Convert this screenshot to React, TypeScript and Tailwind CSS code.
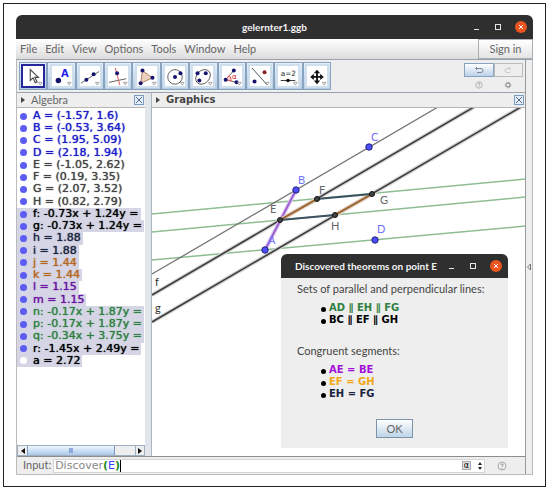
import React, { useState } from 'react';

const OBJECTS = [
    { text: "A = (-1.57, 1.6)", color: "text-[#1c1cc8]" },
    { text: "B = (-0.53, 3.64)", color: "text-[#1c1cc8]" },
    { text: "C = (1.95, 5.09)", color: "text-[#1c1cc8]" },
    { text: "D = (2.18, 1.94)", color: "text-[#1c1cc8]" },
    { text: "E = (-1.05, 2.62)", color: "text-[#444]" },
    { text: "F = (0.19, 3.35)", color: "text-[#444]" },
    { text: "G = (2.07, 3.52)", color: "text-[#444]" },
    { text: "H = (0.82, 2.79)", color: "text-[#444]" },
    { text: "f: -0.73x + 1.24y =", color: "text-black", selected: true },
    { text: "g: -0.73x + 1.24y =", color: "text-black", selected: true },
    { text: "h = 1.88", color: "text-[#1b2440]", selected: true },
    { text: "i = 1.88", color: "text-[#1b2440]", selected: true },
    { text: "j = 1.44", color: "text-[#b5651d]", selected: true },
    { text: "k = 1.44", color: "text-[#b5651d]", selected: true },
    { text: "l = 1.15", color: "text-[#6a10a0]", selected: true },
    { text: "m = 1.15", color: "text-[#6a10a0]", selected: true },
    { text: "n: -0.17x + 1.87y =", color: "text-[#2f8040]", selected: true },
    { text: "p: -0.17x + 1.87y =", color: "text-[#2f8040]", selected: true },
    { text: "q: -0.34x + 3.75y =", color: "text-[#2f8040]", selected: true },
    { text: "r: -1.45x + 2.49y =", color: "text-black", selected: true },
    { text: "a = 2.72", color: "text-black", selected: true, hidden: true },
];

const GREEN_LINES = [
    [152, 214, 526, 179],
    [152, 232, 526, 197],
    [152, 260, 526, 226],
];

const POINTS = [
    { name: "A", x: 265, y: 250, lx: 268, ly: 244, free: true },
    { name: "B", x: 296, y: 190, lx: 298, ly: 184, free: true },
    { name: "C", x: 369, y: 147, lx: 371, ly: 141, free: true },
    { name: "D", x: 375, y: 240, lx: 377, ly: 233, free: true },
    { name: "E", x: 280, y: 220, lx: 270, ly: 213 },
    { name: "F", x: 317, y: 199, lx: 319, ly: 194 },
    { name: "G", x: 372, y: 194, lx: 380, ly: 204 },
    { name: "H", x: 335, y: 215, lx: 331, ly: 230 },
];

const Dot = ({ x, y, fill = "#14146e" }: { x: number; y: number; fill?: string }) => (
    <circle cx={x} cy={y} r="2.2" fill={fill} />
);

const TOOLS = [
    {
        label: "Move",
        icon: <path d="M8 4v12l3-3 2.500 5.500 2-1-2.500-5h4z" fill="#fff" stroke="#444" strokeWidth="1.200" />,
    },
    {
        label: "Point",
        icon: (
            <>
                <circle cx="7" cy="16" r="3" fill="#14146e" />
                <text x="10" y="12" fontSize="11" fontWeight="bold" fill="#2222ee">A</text>
            </>
        ),
    },
    {
        label: "Line",
        icon: (
            <>
                <path d="M1 19 21 6" stroke="#555" />
                <Dot x={7} y={15} />
                <Dot x={15} y={9} />
            </>
        ),
    },
    {
        label: "Perpendicular line",
        icon: (
            <>
                <path d="M1 18 20 14" stroke="#555" />
                <path d="M8 2 13 21" stroke="#e66a6a" strokeWidth="1.200" />
                <Dot x={10} y={8} />
            </>
        ),
    },
    {
        label: "Polygon",
        icon: (
            <>
                <path d="M6 5 17 13 4 19z" fill="#ecd0be" stroke="#a8745c" />
                <Dot x={6} y={5} />
                <Dot x={17} y={13} />
                <Dot x={4} y={19} />
            </>
        ),
    },
    {
        label: "Circle with center",
        icon: (
            <>
                <circle cx="11" cy="12" r="8" fill="none" stroke="#555" />
                <Dot x={11} y={12} />
                <Dot x={17} y={8} />
            </>
        ),
    },
    {
        label: "Ellipse",
        icon: (
            <>
                <ellipse cx="11" cy="12" rx="9" ry="7" transform="rotate(-45 11 12)" fill="none" stroke="#555" />
                <Dot x={5} y={8} />
                <Dot x={14} y={8} />
                <Dot x={7} y={16} />
            </>
        ),
    },
    {
        label: "Angle",
        icon: (
            <>
                <path d="M4 15 13 5M4 15 16 18" stroke="#555" />
                <path d="M4 15 8 10.500A7 7 0 0 1 10 16.500z" fill="#ffd2d2" stroke="#e04848" />
                <text x="11" y="14" fontSize="8" fill="#e03030">α</text>
                <Dot x={4} y={15} />
                <Dot x={13} y={5} />
                <Dot x={16} y={18} />
            </>
        ),
    },
    {
        label: "Reflect about line",
        icon: (
            <>
                <path d="M2 2 19 21" stroke="#444" />
                <Dot x={5} y={17} />
                <Dot x={16} y={7} fill="#8c2020" />
            </>
        ),
    },
    {
        label: "Slider",
        icon: (
            <>
                <text x="3" y="11" fontSize="8" fill="#222">a=2</text>
                <path d="M3 16h16" stroke="#222" />
                <circle cx="11" cy="16" r="2" fill="#111" />
            </>
        ),
    },
    {
        label: "Move graphics view",
        icon: (
            <path
                d="M11 4 7.500 8H10v3H7.500V8.500L3.500 12l4 3.500V13H10v3H7.500L11 20l3.500-4H12v-3h2.500v2.500l4-3.500-4-3.500V11H12V8h2.500z"
                fill="#111"
            />
        ),
    },
];

const WindowButtons = () => (
    <div className="flex shrink-0 items-center gap-3">
        <button aria-label="Minimize" className="flex h-3 w-[10px] items-center justify-center">
            <span className="mt-1 h-px w-[5px] bg-gray-200" />
        </button>
        <button aria-label="Maximize" className="flex h-3 w-[10px] items-center justify-center">
            <span className="h-[6px] w-[6px] border border-gray-200" />
        </button>
        <button aria-label="Close" className="flex h-3 w-3 items-center justify-center rounded-full bg-[#e9541f]">
            <svg viewBox="0 0 8 8" className="h-2 w-2">
                <path d="M2 2 6 6M6 2 2 6" stroke="#fff" />
            </svg>
        </button>
    </div>
);

const PanelClose = ({ label }: { label: string }) => (
    <button aria-label={label} className="flex h-[10px] w-[10px] items-center justify-center border border-[#7a9cc0] bg-[#e4eefa]">
        <svg viewBox="0 0 8 8" className="h-2 w-2">
            <path d="M1 1 7 7M7 1 1 7" stroke="#556b85" />
        </svg>
    </button>
);

const HelpIcon = () => (
    <svg viewBox="0 0 10 10" className="h-full w-full">
        <circle cx="5" cy="5" r="4" fill="none" stroke="#aaa" />
        <path d="M3.800 4Q4 2.800 5 2.800 6.500 3 6 4.200L5 5.300V6M5 7v1" fill="none" stroke="#999" />
    </svg>
);

const Theorem = ({ color, children }: { color: string; children: React.ReactNode }) => (
    <li className="flex h-3 items-center gap-[3px]">
        <span className="mt-[2px] h-[5px] w-[5px] rounded-full bg-black" />
        <span className={`font-['DejaVu_Sans',sans-serif] text-[10px] leading-3 font-bold ${color}`}>{children}</span>
    </li>
);

const Dialog = () => (
    <div role="dialog" aria-label="Discovered theorems on point E" className="absolute right-[17px] bottom-2 w-[227px] rounded-t-md bg-[#eeeeee] text-[#444]">
        <div className="flex h-6 items-center justify-between rounded-t-md bg-[#302f2f] pr-[6px] pl-[14px]">
            <h2 className="text-[10px] font-bold whitespace-nowrap text-gray-100">Discovered theorems on point E</h2>
            <WindowButtons />
        </div>
        <div className="px-4 pt-[5px] pb-[10px] leading-3 whitespace-nowrap">
            <p>Sets of parallel and perpendicular lines:</p>
            <ul className="mt-[7px] pl-6">
                <Theorem color="text-[#2f8040]">AD ∥ EH ∥ FG</Theorem>
                <Theorem color="text-black">BC ∥ EF ∥ GH</Theorem>
            </ul>
            <p className="mt-[19px]">Congruent segments:</p>
            <ul className="mt-[7px] pl-6">
                <Theorem color="text-[#a010d8]">AE = BE</Theorem>
                <Theorem color="text-[#f0a818]">EF = GH</Theorem>
                <Theorem color="text-[#1b2440]">EH = FG</Theorem>
            </ul>
            <div className="mt-[19px] flex justify-center">
                <button className="h-[19px] w-[37px] border border-[#7f93a8] bg-linear-to-b from-white to-[#bed4e8] text-[#666]">OK</button>
            </div>
        </div>
    </div>
);

const Construction = () => (
    <svg viewBox="152 108 374 348" preserveAspectRatio="xMinYMin slice" className="absolute inset-0 h-full w-full" fontFamily="Lato, sans-serif">
        {GREEN_LINES.map(([x1, y1, x2, y2]) => (
            <line key={y1} x1={x1} y1={y1} x2={x2} y2={y2} stroke="#8fbd93" strokeWidth="1.500" />
        ))}
        <path d="M152 274 438 107" stroke="#777" strokeWidth="1.300" />
        <path d="M152 295 474 107M152 322 521 107" stroke="#d4d4d4" strokeWidth="4" />
        <path d="M152 295 474 107M152 322 521 107" stroke="#3c3c3c" strokeWidth="1.600" />
        <path d="M265 250 296 190" stroke="#dcc4ee" strokeWidth="4" />
        <path d="M265 250 296 190" stroke="#9b5fd0" strokeWidth="1.800" />
        <path d="M280 220 317 199M335 215 372 194" stroke="#e0cbb8" strokeWidth="4" />
        <path d="M280 220 317 199M335 215 372 194" stroke="#96602e" strokeWidth="2" />
        <path d="M280 220 335 215M317 199 372 194" stroke="#3c5260" strokeWidth="2" />
        {POINTS.map((p) => (
            <g key={p.name}>
                <circle cx={p.x} cy={p.y} r={p.free ? 3.2 : 2.5} fill={p.free ? "#4d4dff" : "#444"} stroke={p.free ? "#20207a" : "#111"} />
                <text x={p.lx} y={p.ly} fontSize="11" fill={p.free ? "#7070ff" : "#666"}>{p.name}</text>
            </g>
        ))}
        <text x="155" y="286" fontSize="11" fill="#333">f</text>
        <text x="155" y="312" fontSize="11" fill="#333">g</text>
    </svg>
);

const App: React.FC = () => {
    const [activeTool, setActiveTool] = useState("Move");

    return (
        <div className="flex min-h-screen flex-col bg-white pt-[3px] pr-1 pb-[5px] pl-[3px] font-[Lato,'DejaVu_Sans',sans-serif] text-[11px] text-[#666]">
            <div className="flex flex-1 flex-col border border-[#222] px-3 pt-[11px] pb-[11px]">
                {/* Title bar */}
                <header className="flex h-6 shrink-0 items-center rounded-t-md bg-[#302f2f] pr-[6px] pl-[62px]">
                    <h1 className="flex-1 text-center text-[10px] font-bold text-gray-100">gelernter1.ggb</h1>
                    <WindowButtons />
                </header>

                {/* Menu */}
                <nav className="flex h-[21px] shrink-0 items-center justify-between border-b border-[#9aa3ad] bg-linear-to-b from-white to-[#dcdcdc] pl-1">
                    <div className="flex items-center gap-2">
                        {["File", "Edit", "View", "Options", "Tools", "Window", "Help"].map((item) => (
                            <button key={item}>{item}</button>
                        ))}
                    </div>
                    <button className="h-5 w-[55px] border border-[#a8aeb6] bg-linear-to-b from-white to-[#e4e4e4]">Sign in</button>
                </nav>

                <div className="flex flex-1 border-x border-b border-[#bbb] bg-[#eeeeee]">
                    <div className="flex min-w-0 flex-1 flex-col">
                        {/* Toolbar */}
                        <div className="flex h-8 shrink-0 items-center justify-between pr-[2px] pl-[2px]">
                            <div className="grid h-7 w-[312px] grid-cols-11">
                                {TOOLS.map((tool) => (
                                    <button
                                        key={tool.label}
                                        aria-label={tool.label}
                                        onClick={() => setActiveTool(tool.label)}
                                        className="flex items-center justify-center border border-[#88a3c0] bg-linear-to-b from-[#e6f0fa] to-[#b6cce2]"
                                    >
                                        <span className={`flex h-6 w-6 border-2 bg-white ${activeTool === tool.label ? "border-[#26269a]" : "border-[#cfdfee]"}`}>
                                            <svg viewBox="0 0 22 22" className="h-full w-full" fill="none" fontFamily="DejaVu Sans, sans-serif">
                                                {tool.icon}
                                                <path d="M17 18h4l-2 3z" fill="#fff" stroke="#888" strokeWidth="0.800" />
                                            </svg>
                                        </span>
                                    </button>
                                ))}
                            </div>
                            <div className="grid w-[59px] grid-cols-2 justify-items-center gap-y-1">
                                <button aria-label="Undo" className="flex h-[14px] w-full items-center justify-center border border-[#88a3c0] bg-linear-to-b from-white to-[#bcd2e8]">
                                    <svg viewBox="0 0 10 8" className="h-2 w-[10px]" fill="none" stroke="#7d8a96">
                                        <path d="M3 1 1.500 2.500 3 4M2 2.500h5q2 0 2 2t-2 2H3" />
                                    </svg>
                                </button>
                                <button aria-label="Redo" className="flex h-[14px] w-full items-center justify-center border border-[#bbb]">
                                    <svg viewBox="0 0 10 8" className="h-2 w-[10px]" fill="none" stroke="#c8c8c8">
                                        <path d="M6 1 7.500 2.500 6 4M7 2.500H4q-2 0-2 2t2 2h3" />
                                    </svg>
                                </button>
                                <button aria-label="Help" className="h-2 w-2"><HelpIcon /></button>
                                <button aria-label="Settings" className="h-2 w-2">
                                    <svg viewBox="0 0 8 8" className="h-full w-full" fill="none" stroke="#999">
                                        <circle cx="4" cy="4" r="2" strokeWidth="1.300" />
                                        <circle cx="4" cy="4" r="3" strokeWidth="0.800" strokeDasharray="1 1.350" />
                                    </svg>
                                </button>
                            </div>
                        </div>

                        <div className="flex flex-1 border-t border-[#9aa3ad]">
                            {/* Algebra view */}
                            <section className="flex w-[128px] shrink-0 flex-col">
                                <div className="flex h-[15px] shrink-0 items-center border-b border-[#b5b5b5] pr-[1px] pl-1">
                                    <svg viewBox="0 0 4 6" className="h-[6px] w-1"><path d="M0 0v6l4-3z" fill="#444" /></svg>
                                    <h2 className="flex-1 pl-[6px] leading-3">Algebra</h2>
                                    <PanelClose label="Close algebra view" />
                                </div>
                                <div className="flex-1 bg-white pt-[2px]">
                                    <ul className="grid h-[257px] auto-rows-fr overflow-hidden font-['DejaVu_Sans',sans-serif] leading-3 whitespace-nowrap">
                                        {OBJECTS.map((obj) => (
                                            <li key={obj.text} className="flex">
                                                <span className={`flex w-4 shrink-0 items-center pl-[3px] ${obj.selected ? "bg-[#d5d5e6]" : ""}`}>
                                                    <button
                                                        aria-label={`Toggle ${obj.text[0]}`}
                                                        className={`h-[7px] w-[7px] rounded-full ${obj.hidden ? "bg-white" : "bg-[#5c5cf5]"}`}
                                                    />
                                                </span>
                                                <span className={`pr-[2px] [text-shadow:0_0_1px_currentColor] ${obj.color} ${obj.selected ? "bg-[#d5d5e6]" : ""}`}>
                                                    {obj.text}
                                                </span>
                                            </li>
                                        ))}
                                    </ul>
                                </div>
                                <div className="flex h-[11px] shrink-0 items-stretch border border-[#9fb0c2]">
                                    <button aria-label="Scroll left" className="flex w-[9px] items-center justify-center">
                                        <svg viewBox="0 0 4 6" className="h-[6px] w-1"><path d="M4 0v6L0 3z" fill="#111" /></svg>
                                    </button>
                                    <div className="flex w-[88px] items-center justify-center border-x border-[#7a9cc0] bg-linear-to-b from-[#f0f6fd] to-[#acc8ea]">
                                        <span className="h-[5px] w-1 bg-[#8ea8dc]" />
                                    </div>
                                    <span className="flex-1" />
                                    <button aria-label="Scroll right" className="flex w-[9px] items-center justify-center border-l border-[#9fb0c2]">
                                        <svg viewBox="0 0 4 6" className="h-[6px] w-1"><path d="M0 0v6l4-3z" fill="#111" /></svg>
                                    </button>
                                </div>
                            </section>

                            <div className="w-[7px] shrink-0 border-r border-[#a9b4c0] bg-[#e2e6ea]" />

                            {/* Graphics view */}
                            <section className="flex min-w-0 flex-1 flex-col">
                                <div className="flex h-[15px] shrink-0 items-center border-b border-[#b5b5b5] pr-[1px] pl-1">
                                    <svg viewBox="0 0 4 6" className="h-[6px] w-1"><path d="M0 0v6l4-3z" fill="#444" /></svg>
                                    <h2 className="flex-1 pl-[6px] font-['DejaVu_Sans',sans-serif] text-[10px] leading-3 font-bold text-[#444]">Graphics</h2>
                                    <PanelClose label="Close graphics view" />
                                </div>
                                <div className="relative flex-1 overflow-hidden bg-white">
                                    <Construction />
                                    <Dialog />
                                </div>
                            </section>
                        </div>

                        {/* Input bar */}
                        <div className="flex h-[18px] shrink-0 items-center border-t border-[#8d8d8d] pr-[18px] pl-[6px]">
                            <label htmlFor="command">Input:</label>
                            <div className="relative ml-[2px] flex h-[14px] flex-1 items-center border border-[#d5d5d5] bg-white">
                                <div aria-hidden="true" className="pointer-events-none absolute inset-0 flex items-center pl-px font-['DejaVu_Sans',sans-serif] leading-3 text-[#888]">
                                    <span>Discover</span>
                                    <span className="font-bold text-[#228b22]">(</span>
                                    <span className="text-[#3c3cff]">E</span>
                                    <span className="font-bold text-[#228b22]">)</span>
                                    <span className="h-3 w-px bg-black" />
                                </div>
                                <input id="command" defaultValue="Discover(E)" className="min-w-0 flex-1 bg-transparent pl-px font-['DejaVu_Sans',sans-serif] text-transparent outline-none" />
                                <button aria-label="Symbols" className="flex h-[9px] w-[9px] items-center justify-center border border-[#aaa] bg-[#e0e0e0] font-['DejaVu_Sans',sans-serif] text-[8px] leading-none text-black">α</button>
                                <button aria-label="History" className="mr-[2px] ml-[7px] h-2 w-1">
                                    <svg viewBox="0 0 4 8" className="h-full w-full"><path d="M0 3 2 0l2 3zM0 5l2 3 2-3z" fill="#222" /></svg>
                                </button>
                            </div>
                            <button aria-label="Input help" className="ml-3 h-[10px] w-[10px]"><HelpIcon /></button>
                        </div>
                    </div>
                    <button aria-label="Show views" className="flex w-[7px] shrink-0 items-center justify-center border-l border-[#999]">
                        <svg viewBox="0 0 4 8" className="h-2 w-1" fill="none"><path d="M3.500 1v6L.5 4z" stroke="#555" strokeWidth="0.800" /></svg>
                    </button>
                </div>
            </div>
        </div>
    );
};

export default App;
